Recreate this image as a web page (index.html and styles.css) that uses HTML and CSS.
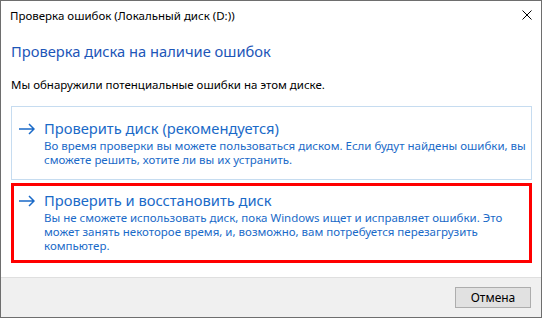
FILE: index.html
```html
<!DOCTYPE html>
<html lang="ru">
<head>
<meta charset="utf-8">
<title>Проверка ошибок</title>
<link rel="stylesheet" href="styles.css">
</head>
<body>
<div class="window">
  <div class="titlebar">
    <span class="title">Проверка ошибок (Локальный диск (D:))</span>
    <svg class="close" width="10" height="10" viewBox="0 0 10 10" aria-hidden="true">
      <path d="M0.5 0.5 L9.5 9.5 M9.5 0.5 L0.5 9.5" stroke="#000" stroke-width="1" fill="none"/>
    </svg>
  </div>
  <div class="content">
    <h1 class="heading">Проверка диска на наличие ошибок</h1>
    <p class="intro">Мы обнаружили потенциальные ошибки на этом диске.</p>
    <div class="cmd cmd-hover">
      <svg class="arrow" width="16" height="12" viewBox="0 0 16 12" aria-hidden="true">
        <path d="M0 6 H15 M10 1 L15 6 L10 11" stroke="#1a6ac8" stroke-width="1.5" fill="none"/>
      </svg>
      <div class="cmd-text">
        <div class="cmd-title">Проверить диск (рекомендуется)</div>
        <div class="cmd-desc">Во время проверки вы можете пользоваться диском. Если будут найдены ошибки, вы<br>сможете решить, хотите ли вы их устранить.</div>
      </div>
    </div>
    <div class="cmd cmd-marked">
      <svg class="arrow" width="16" height="12" viewBox="0 0 16 12" aria-hidden="true">
        <path d="M0 6 H15 M10 1 L15 6 L10 11" stroke="#1a6ac8" stroke-width="1.5" fill="none"/>
      </svg>
      <div class="cmd-text">
        <div class="cmd-title">Проверить и восстановить диск</div>
        <div class="cmd-desc">Вы не сможете использовать диск, пока Windows ищет и исправляет ошибки. Это<br>может занять некоторое время, и, возможно, вам потребуется перезагрузить<br>компьютер.</div>
      </div>
    </div>
  </div>
  <div class="footer">
    <button class="btn" type="button">Отмена</button>
  </div>
</div>
</body>
</html>
```

FILE: styles.css
```css
html, body {
  margin: 0;
  padding: 0;
  background: #ffffff;
}

.window {
  box-sizing: border-box;
  width: 542px;
  height: 318px;
  border: 1px solid #6e6e6e;
  background: #ffffff;
  display: flex;
  flex-direction: column;
  font-family: "Segoe UI", "Noto Sans", "Open Sans", sans-serif;
  font-size: 11.5px;
  color: #000000;
}

.titlebar {
  height: 30px;
  flex: none;
  display: flex;
  align-items: center;
  justify-content: space-between;
  padding: 0 9px 0 9px;
}

.title {
  font-size: 11.5px;
  line-height: 16px;
}

.close {
  display: block;
  margin-top: -2px;
}

.content {
  flex: 1;
  padding: 10px 9px 0 10px;
}

.heading {
  margin: 0;
  font-size: 14.7px;
  line-height: 20px;
  font-weight: normal;
  color: #1d56b8;
}

.intro {
  margin: 16px 0 0 0;
  line-height: 16px;
}

.cmd {
  display: flex;
  align-items: flex-start;
  gap: 9px;
}

.cmd-hover {
  margin-top: 13px;
  border: 1px solid #c6dcf0;
  padding: 11px 0 12px 7px;
}

.cmd-marked {
  margin-top: 3px;
  border: 3px solid #ff0000;
  padding: 4px 0 7px 5px;
}

.arrow {
  flex: none;
  display: block;
  margin-top: 5px;
}

.cmd-title {
  font-size: 14.7px;
  line-height: 20px;
  color: #1a6ac8;
  margin-bottom: 1px;
}

.cmd-desc {
  font-size: 11.5px;
  line-height: 14px;
  color: #1a6ac8;
  white-space: nowrap;
}

.footer {
  flex: none;
  height: 40px;
  box-sizing: border-box;
  border-top: 1px solid #dfdfdf;
  background: #f0f0f0;
  display: flex;
  justify-content: flex-end;
  align-items: flex-start;
  padding: 9px 10px 0 0;
}

.btn {
  box-sizing: border-box;
  width: 76px;
  height: 21px;
  margin: 0;
  padding: 0;
  border: 1px solid #adadad;
  background: #e1e1e1;
  font-family: "Segoe UI", "Noto Sans", "Open Sans", sans-serif;
  font-size: 12px;
  color: #000000;
  line-height: 18px;
}
```
